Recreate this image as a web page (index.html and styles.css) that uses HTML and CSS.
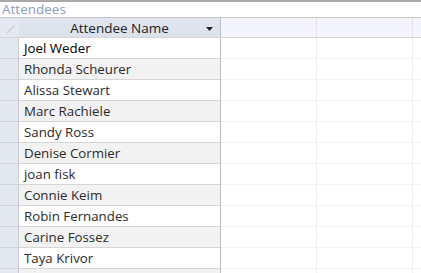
FILE: index.html
```html
<!DOCTYPE html>
<html lang="en">
<head>
    <meta charset="UTF-8">
    <title>Attendees</title>
    <link rel="stylesheet" href="styles.css">
</head>
<body>
    <div class="sheet">
        <div class="sheet-title">Attendees</div>
        <div class="grid">
            <div class="head-row">
                <div class="corner">
                    <svg width="12" height="12" viewBox="0 0 12 12"><path d="M2 11 L11 2 L11 4 L4 11 Z" fill="#c9d0da"/></svg>
                </div>
                <div class="col-head">
                    <span>Attendee Name</span>
                    <svg class="arrow" width="7" height="4" viewBox="0 0 7 4"><path d="M0 0 H7 L3.5 4 Z" fill="#222"/></svg>
                </div>
                <div class="empty-head"></div>
                <div class="empty-head"></div>
                <div class="empty-head last"></div>
            </div>
            <div class="rows" id="rows"></div>
        </div>
    </div>

    <script>
        // lista uczestników
        const names = ["Joel Weder", "Rhonda Scheurer", "Alissa Stewart", "Marc Rachiele", "Sandy Ross",
            "Denise Cormier", "joan fisk", "Connie Keim", "Robin Fernandes", "Carine Fossez", "Taya Krivor", ""];

        const rows = document.getElementById("rows");
        names.forEach((name, i) => {
            const row = document.createElement("div");
            row.className = "row" + (i % 2 ? " alt" : "") + (i === 0 ? " current" : "");
            row.innerHTML = `<div class="sel"></div><div class="cell">${name}</div>
                <div class="blank"></div><div class="blank"></div><div class="blank last"></div>`;
            rows.appendChild(row);
        });
    </script>
</body>
</html>
```

FILE: styles.css
```css
* {
    margin: 0;
    padding: 0;
    box-sizing: border-box;
}

html, body {
    height: 100%;
    overflow: hidden;
}

body {
    background: #fff;
    font-family: 'Open Sans', 'Noto Sans', sans-serif;
}

.sheet {
    border-top: 2px solid #a9a9a9;
    padding-top: 1px;
}

.sheet-title {
    color: #8aa0bc;
    font-size: 13.5px;
    height: 14px;
    line-height: 13px;
    padding-left: 2px;
}

.grid {
    border-top: 1px solid #c6c6c6;
}

.head-row,
.row {
    display: grid;
    grid-template-columns: 19px 202px 96px 96px 1fr;
}

.head-row {
    height: 20px;
    border-bottom: 1px solid #d5d5d5;
}

.corner {
    background: #e5e9ef;
    display: flex;
    align-items: center;
    justify-content: center;
}

.col-head {
    background: linear-gradient(#e1e6ee, #dbe1ea);
    border-right: 1px solid #b9bfc8;
    display: flex;
    align-items: center;
    justify-content: center;
    position: relative;
    font-size: 13.5px;
    color: #222;
}

.col-head .arrow {
    position: absolute;
    right: 7px;
    top: 9px;
}

.empty-head {
    background: #f4f5fc;
    border-right: 1px solid #e4e4ea;
}

.empty-head.last,
.blank.last {
    border-right: none;
}

.row {
    height: 21px;
}

.sel {
    background: #e3e7ee;
    border-right: 1px solid #c9ced6;
    border-bottom: 1px solid #d0d5dc;
}

.cell {
    background: #fff;
    border-right: 1px solid #b9bfc8;
    border-bottom: 1px solid #d6d6d6;
    font-size: 13.3px;
    color: #2a2a2a;
    padding-left: 5px;
    line-height: 20px;
    white-space: nowrap;
}

.row.alt .cell {
    background: #f2f2f2;
}

.row.current .cell {
    color: #000;
}

.blank {
    border-right: 1px solid #eeeeee;
    border-bottom: 1px solid #f3f3f3;
}
```
